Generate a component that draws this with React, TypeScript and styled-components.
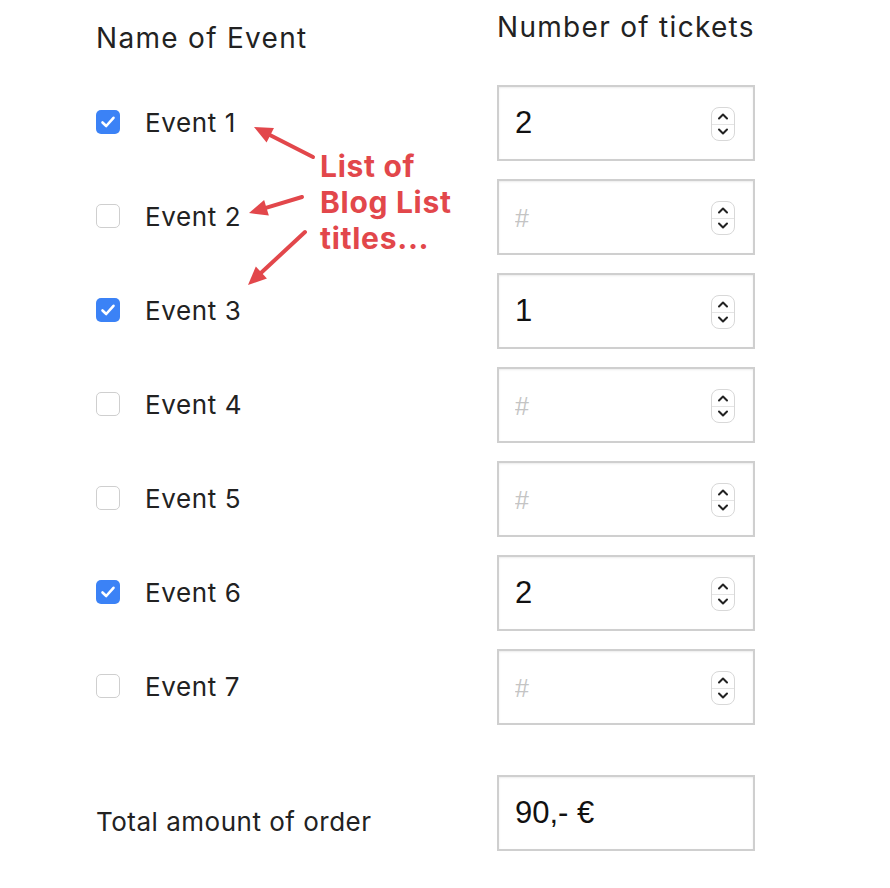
import React from 'react';
import styled, { createGlobalStyle } from 'styled-components';

const Global = createGlobalStyle`
  html, body {
    margin: 0;
    padding: 0;
    background: #fff;
  }
  body {
    font-family: Inter, 'Liberation Sans', sans-serif;
    color: #222;
  }
`;

const Page = styled.div`
  position: relative;
  width: 890px;
  height: 888px;
  box-sizing: border-box;
  padding-left: 96px;
`;

const Form = styled.div`
  display: grid;
  grid-template-columns: 401px 258px;
  row-gap: 18px;
`;

const Header = styled.div<{ $top: number }>`
  padding-top: ${(p) => p.$top}px;
  font-size: 28px;
  line-height: 34px;
  height: 67px;
  box-sizing: border-box;
  letter-spacing: 1.3px;
  white-space: nowrap;
`;

const EventLabel = styled.label`
  display: flex;
  align-items: center;
  gap: 25px;
  font-size: 26px;
  letter-spacing: 0.6px;
  height: 76px;
  padding-bottom: 2px;
  box-sizing: border-box;
`;

const Check = styled.span<{ $on: boolean }>`
  width: 24px;
  height: 24px;
  box-sizing: border-box;
  border-radius: 5px;
  background: ${(p) => (p.$on ? '#3b82f6' : '#fff')};
  border: ${(p) => (p.$on ? 'none' : '1.5px solid #cfcfcf')};
  display: flex;
  align-items: center;
  justify-content: center;
  flex: none;
`;

const Box = styled.div`
  height: 76px;
  box-sizing: border-box;
  border: 2px solid #cfcfcf;
  box-shadow: inset 0 1px 2px rgba(0, 0, 0, 0.08);
  display: flex;
  align-items: center;
  padding: 0 18px 0 16px;
  background: #fff;
`;

const Value = styled.input`
  flex: 1;
  min-width: 0;
  border: none;
  outline: none;
  background: transparent;
  font-family: 'Liberation Sans', Arial, sans-serif;
  font-size: 31px;
  color: #111;
  padding: 0;
  &::placeholder {
    color: #c4c4c4;
    font-size: 25px;
  }
`;

const Spinner = styled.span`
  width: 24px;
  height: 34px;
  box-sizing: border-box;
  border: 1px solid #d8d8d8;
  border-radius: 8px;
  display: flex;
  flex-direction: column;
  flex: none;
  margin-top: 2px;
`;

const SpinHalf = styled.span<{ $top?: boolean }>`
  flex: 1;
  display: flex;
  align-items: center;
  justify-content: center;
  border-bottom: ${(p) => (p.$top ? '1px solid #e4e4e4' : 'none')};
`;

const TotalLabel = styled.div`
  font-size: 26px;
  letter-spacing: 0.5px;
  align-self: end;
  padding-bottom: 14px;
`;

const TotalBox = styled(Box)`
  margin-top: 32px;
`;

const Note = styled.div`
  position: absolute;
  left: 320px;
  top: 148px;
  font-family: Inter, 'Liberation Sans', sans-serif;
  font-weight: 700;
  font-size: 30px;
  line-height: 36px;
  letter-spacing: 0.7px;
  color: #e2474b;
`;

const Arrows = styled.svg`
  position: absolute;
  left: 0;
  top: 0;
  pointer-events: none;
`;

const Chevron = ({ up }: { up?: boolean }) => (
  <svg width="12" height="8" viewBox="0 0 12 8">
    <path
      d={up ? 'M2 6.5 L6 2.5 L10 6.5' : 'M2 1.5 L6 5.5 L10 1.5'}
      fill="none"
      stroke="#222"
      strokeWidth="2"
      strokeLinecap="round"
      strokeLinejoin="round"
    />
  </svg>
);

const Tick = () => (
  <svg width="16" height="14" viewBox="0 0 16 14">
    <path
      d="M2.5 7.5 L6.2 11 L13.5 2.8"
      fill="none"
      stroke="#fff"
      strokeWidth="2.6"
      strokeLinecap="round"
      strokeLinejoin="round"
    />
  </svg>
);

const events = [
  { name: 'Event 1', on: true, count: '2' },
  { name: 'Event 2', on: false, count: '' },
  { name: 'Event 3', on: true, count: '1' },
  { name: 'Event 4', on: false, count: '' },
  { name: 'Event 5', on: false, count: '' },
  { name: 'Event 6', on: true, count: '2' },
  { name: 'Event 7', on: false, count: '' },
];

const Arrow = ({ x1, y1, x2, y2 }: { x1: number; y1: number; x2: number; y2: number }) => {
  const a = Math.atan2(y2 - y1, x2 - x1);
  const len = 20;
  const w = 0.42;
  const bx = x2 - Math.cos(a) * len * 0.75;
  const by = y2 - Math.sin(a) * len * 0.75;
  const p1 = `${x2 - Math.cos(a - w) * len},${y2 - Math.sin(a - w) * len}`;
  const p2 = `${x2 - Math.cos(a + w) * len},${y2 - Math.sin(a + w) * len}`;
  return (
    <g>
      <line x1={x1} y1={y1} x2={bx} y2={by} stroke="#e2474b" strokeWidth="4" strokeLinecap="round" />
      <polygon points={`${x2},${y2} ${p1} ${p2}`} fill="#e2474b" />
    </g>
  );
};

export default function App() {
  return (
    <>
      <Global />
      <Page>
        <Form>
          <Header $top={21}>Name of Event</Header>
          <Header $top={10}>Number of tickets</Header>
          {events.map((e) => (
            <React.Fragment key={e.name}>
              <EventLabel>
                <Check $on={e.on}>{e.on && <Tick />}</Check>
                {e.name}
              </EventLabel>
              <Box>
                <Value defaultValue={e.count} placeholder="#" readOnly />
                <Spinner>
                  <SpinHalf $top>
                    <Chevron up />
                  </SpinHalf>
                  <SpinHalf>
                    <Chevron />
                  </SpinHalf>
                </Spinner>
              </Box>
            </React.Fragment>
          ))}
          <TotalLabel>Total amount of order</TotalLabel>
          <TotalBox>
            <Value defaultValue="90,- €" readOnly />
          </TotalBox>
        </Form>
        <Note>
          List of
          <br />
          Blog List
          <br />
          titles...
        </Note>
        <Arrows width="890" height="888">
          <Arrow x1={313} y1={157} x2={254} y2={127} />
          <Arrow x1={302} y1={197} x2={249} y2={213} />
          <Arrow x1={305} y1={232} x2={248} y2={285} />
        </Arrows>
      </Page>
    </>
  );
}
